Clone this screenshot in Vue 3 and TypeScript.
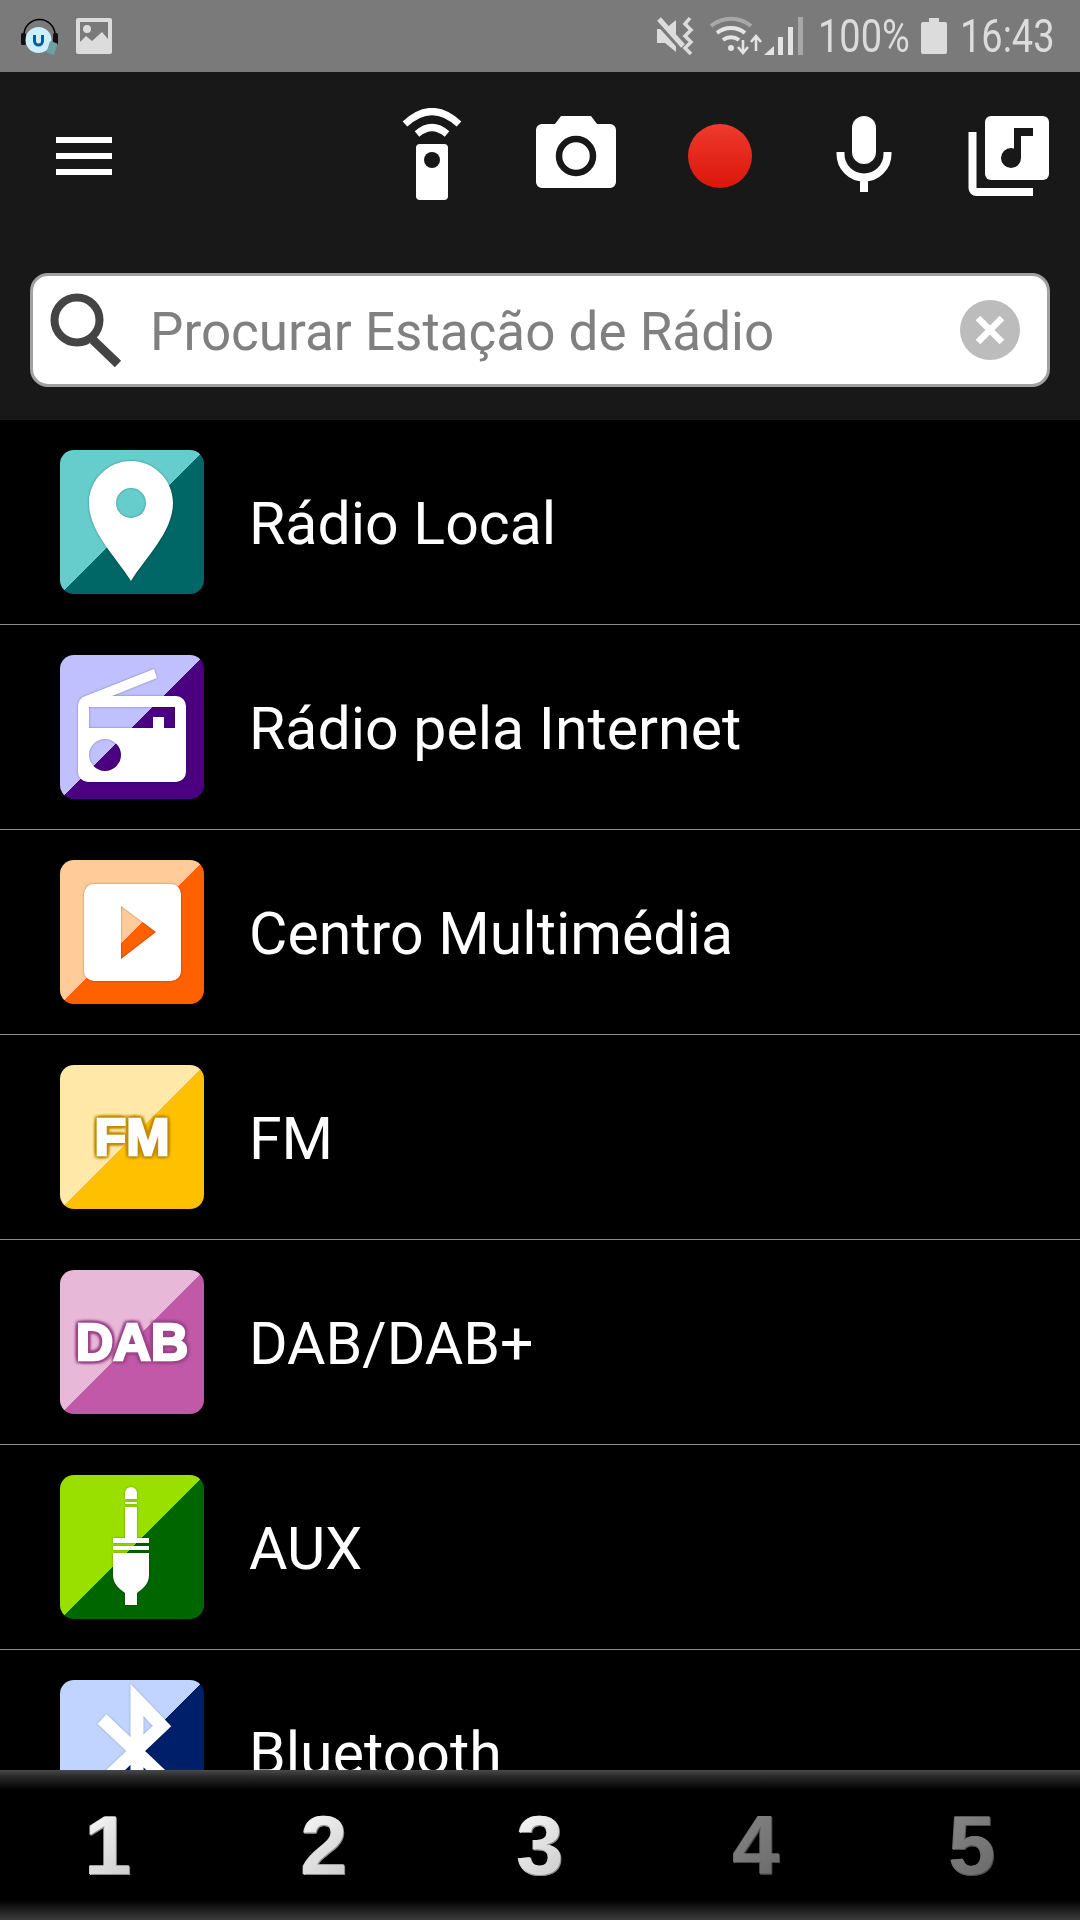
<template>
  <div class="page">
    <div class="status">
      <svg class="st-head" width="42" height="42" viewBox="0 0 42 42">
        <path d="M5 20 A15.500 15.500 0 0 1 36 20" fill="none" stroke="#000" stroke-width="1.500" />
        <rect x="2" y="18" width="5" height="12" rx="1.500" fill="#111" />
        <rect x="34" y="18" width="5" height="12" rx="1.500" fill="#111" />
        <circle cx="19.500" cy="25" r="13" fill="#cdeefc" />
        <path d="M15.500 20 V26 A4 4 0 0 0 23.500 26 V20" fill="none" stroke="#0f5c9c" stroke-width="3" />
        <rect x="29" y="27" width="8" height="12" rx="1" fill="#6f9ea3" transform="rotate(18 33 33)" />
      </svg>
      <svg class="st-pic" width="36" height="36" viewBox="0 0 36 36">
        <path fill-rule="evenodd" fill="#dcdcdc" d="M2 0 H34 A2 2 0 0 1 36 2 V34 A2 2 0 0 1 34 36 H2 A2 2 0 0 1 0 34 V2 A2 2 0 0 1 2 0Z M4 4 V24 L10 18 L16 23 L26 14 L32 21 V4Z" />
        <circle cx="11" cy="11" r="4" fill="#dcdcdc" />
      </svg>
      <div class="st-right">
        <svg width="40" height="40" viewBox="0 0 40 40">
          <path d="M1 13 H9 L20 4 V36 L9 27 H1Z" fill="#dcdcdc" />
          <path d="M0 3 L27 33" stroke="#7a7a7a" stroke-width="7" />
          <path d="M3 3 L27 30" stroke="#dcdcdc" stroke-width="5" />
          <path d="M34 2 L29 8 L35 14 L29 20 L35 26 L29 32 L35 38" fill="none" stroke="#dcdcdc" stroke-width="3.500" />
        </svg>
        <svg width="96" height="42" viewBox="0 0 96 42">
          <path d="M2 11 A31 31 0 0 1 42 11" fill="none" stroke="#a8a8a8" stroke-width="4" />
          <path d="M8 18 A22 22 0 0 1 36 18" fill="none" stroke="#e4e4e4" stroke-width="4" />
          <path d="M14 25 A13 13 0 0 1 30 25" fill="none" stroke="#e4e4e4" stroke-width="4" />
          <circle cx="22" cy="33" r="3" fill="#e4e4e4" />
          <path d="M34 25 V38 M29 32 L34 38 L39 32" fill="none" stroke="#e4e4e4" stroke-width="2.600" />
          <path d="M47 21 V36 M42 27 L47 21 L52 27" fill="none" stroke="#e4e4e4" stroke-width="2.600" />
          <path d="M55 40 L65 31 V40Z" fill="#e4e4e4" />
          <rect x="69" y="22" width="5" height="18" fill="#e4e4e4" />
          <rect x="79" y="12" width="5" height="28" fill="#e4e4e4" />
          <rect x="89" y="2" width="5" height="38" fill="#a8a8a8" />
        </svg>
        <span class="st-text pct">100%</span>
        <svg width="26" height="36" viewBox="0 0 26 36">
          <path d="M8 0 H18 V4 H24 A2 2 0 0 1 26 6 V34 A2 2 0 0 1 24 36 H2 A2 2 0 0 1 0 34 V6 A2 2 0 0 1 2 4 H8Z" fill="#dcdcdc" />
        </svg>
        <span class="st-text clock">16:43</span>
      </div>
    </div>

    <header class="toolbar">
      <div class="tools">
        <button class="menu">
          <span></span><span></span><span></span>
        </button>
        <div class="tool">
          <svg width="96" height="96" viewBox="0 0 96 96">
            <path d="M21 16 Q48 -9 75 16" fill="none" stroke="#fff" stroke-width="7" />
            <path d="M33 26 Q48 13 63 26" fill="none" stroke="#fff" stroke-width="7" />
            <rect x="32" y="36" width="32" height="56" rx="4" fill="#fff" />
            <circle cx="48" cy="52" r="8" fill="#181818" />
          </svg>
        </div>
        <div class="tool">
          <svg width="96" height="96" viewBox="0 0 96 96">
            <path d="M14 16 H27 L33 8 H63 L69 16 H82 A6 6 0 0 1 88 22 V74 A6 6 0 0 1 82 80 H14 A6 6 0 0 1 8 74 V22 A6 6 0 0 1 14 16Z" fill="#fff" />
            <circle cx="48" cy="48" r="17" fill="none" stroke="#181818" stroke-width="6.500" />
          </svg>
        </div>
        <div class="tool">
          <div class="rec"></div>
        </div>
        <div class="tool">
          <svg width="96" height="96" viewBox="0 0 96 96">
            <rect x="36" y="8" width="24" height="48" rx="12" fill="#fff" />
            <path d="M24.500 44 V46 A23.500 23.500 0 0 0 71.500 46 V44" fill="none" stroke="#fff" stroke-width="8" />
            <rect x="44" y="68" width="8" height="16" fill="#fff" />
          </svg>
        </div>
        <div class="tool">
          <svg width="96" height="96" viewBox="0 0 96 96">
            <rect x="25" y="8" width="64" height="64" rx="6" fill="#fff" />
            <path d="M12.500 24 V80 A4 4 0 0 0 16.500 84 H73" fill="none" stroke="#fff" stroke-width="8" />
            <circle cx="51" cy="50" r="10" fill="#181818" />
            <path d="M54 50 V20 H73 V28 H61 V50Z" fill="#181818" />
          </svg>
        </div>
      </div>

      <div class="search">
        <svg width="84" height="84" viewBox="0 0 84 84">
          <circle cx="34" cy="32" r="22.500" fill="none" stroke="#444" stroke-width="8" />
          <path d="M50 52 L75 76" stroke="#444" stroke-width="9" />
        </svg>
        <span class="placeholder">Procurar Estação de Rádio</span>
        <div class="clear">
          <svg width="32" height="32" viewBox="0 0 32 32">
            <path d="M4 4 L28 28 M28 4 L4 28" stroke="#fff" stroke-width="6.500" />
          </svg>
        </div>
      </div>
    </header>

    <main class="list">
      <div v-for="item in items" :key="item.label" class="row">
        <div class="icon" :style="{ background: `linear-gradient(to bottom right, ${item.light} 50%, ${item.dark} 50%)` }">
          <svg v-if="item.kind === 'pin'" width="144" height="144" viewBox="0 0 144 144">
            <path class="glyph" fill-rule="evenodd" d="M71 11 C94 11 113 30 113 53 C113 82 85 108 71 131 C57 108 29 82 29 53 C29 30 48 11 71 11Z M71 38 A15 15 0 1 0 71 68 A15 15 0 1 0 71 38Z" />
          </svg>
          <svg v-else-if="item.kind === 'radio'" width="144" height="144" viewBox="0 0 144 144">
            <path class="glyph" fill-rule="evenodd" d="M94 14 L97 23 L52 41 H116 A10 10 0 0 1 126 51 V117 A10 10 0 0 1 116 127 H28 A10 10 0 0 1 18 117 V51 C18 47 20 44 23 42Z M29 52 V73 H115 V52Z M45 84 A16 16 0 1 0 45 116 A16 16 0 1 0 45 84Z" />
            <rect x="93" y="62" width="11" height="11" fill="#fff" />
          </svg>
          <svg v-else-if="item.kind === 'play'" width="144" height="144" viewBox="0 0 144 144">
            <path class="glyph" fill-rule="evenodd" d="M34 24 H111 A10 10 0 0 1 121 34 V111 A10 10 0 0 1 111 121 H34 A10 10 0 0 1 24 111 V34 A10 10 0 0 1 34 24Z M61 46 V99 L96 72Z" />
          </svg>
          <svg v-else-if="item.kind === 'jack'" width="144" height="144" viewBox="0 0 144 144">
            <path class="glyph" d="M65 24 V18 A6 6 0 0 1 77 18 V24Z M65 27 H77 V29 H65Z M65 32 H77 V63 H89 V68 H53 V63 H65Z M53 71 H89 V75 H53Z M53 78 H89 V100 C89 108 84 113 77 118 V130 H65 V118 C58 113 53 108 53 100Z" />
          </svg>
          <svg v-else-if="item.kind === 'bluetooth'" width="144" height="144" viewBox="0 0 144 144">
            <path class="glyph-line" d="M42 39 L102 96 L77 120 V20 L102 46 L42 103" />
          </svg>
          <span v-else class="badge" :style="{ '--edge': item.edge }">{{ item.label.split('/')[0] }}</span>
        </div>
        <span class="label">{{ item.label }}</span>
      </div>
    </main>

    <footer class="presets">
      <span v-for="n in 5" :key="n" class="num" :class="{ off: n > 3 }">{{ n }}</span>
    </footer>
  </div>
</template>

<script setup lang="ts">
interface Item {
  label: string
  kind: string
  light: string
  dark: string
  edge?: string
}

const items: Item[] = [
  { label: "Rádio Local", kind: "pin", light: "#66cccc", dark: "#006666" },
  { label: "Rádio pela Internet", kind: "radio", light: "#c0c0ff", dark: "#4b0082" },
  { label: "Centro Multimédia", kind: "play", light: "#ffcc99", dark: "#ff6000" },
  { label: "FM", kind: "text", light: "#ffe8a8", dark: "#ffc000", edge: "#c08c00" },
  { label: "DAB/DAB+", kind: "text", light: "#e8b8d8", dark: "#c158a8", edge: "#9c4488" },
  { label: "AUX", kind: "jack", light: "#99e000", dark: "#006600" },
  { label: "Bluetooth", kind: "bluetooth", light: "#c0d4ff", dark: "#001f6b" }
]
</script>

<style>
body {
  background: #000;
}
</style>

<style scoped>
.page {
  display: flex;
  flex-direction: column;
  width: 1080px;
  height: 1920px;
  overflow: hidden;
  background: #000;
  font-family: Roboto, sans-serif;
}

.status {
  display: flex;
  align-items: center;
  flex: none;
  height: 72px;
  padding: 0 26px 0 19px;
  box-sizing: border-box;
  background: #7a7a7a;
}

.st-pic {
  margin-left: 15px;
}

.st-right {
  display: flex;
  align-items: center;
  gap: 13px;
  margin-left: auto;
}

/* narrow status-bar digits, no condensed family installed */
.st-text {
  font-size: 46px;
  line-height: 72px;
  white-space: nowrap;
  color: #dcdcdc;
  transform: scaleX(0.825);
  transform-origin: left center;
}

.pct {
  width: 90px;
}

.clock {
  width: 94px;
}

.toolbar {
  flex: none;
  height: 348px;
  padding-top: 36px;
  box-sizing: border-box;
  background: #181818;
}

.tools {
  display: flex;
  height: 96px;
}

.menu {
  display: flex;
  flex-direction: column;
  gap: 10px;
  justify-content: center;
  align-items: center;
  width: 144px;
  margin: 0 auto 0 12px;
  padding: 0;
  border: 0;
  background: none;
}

.menu span {
  width: 56px;
  height: 6px;
  background: #fff;
}

.tool {
  display: flex;
  align-items: center;
  justify-content: center;
  width: 144px;
}

.rec {
  width: 64px;
  height: 64px;
  border-radius: 50%;
  background: linear-gradient(#ee3a2e, #dc160a);
}

.search {
  display: flex;
  align-items: center;
  height: 114px;
  margin: 69px 30px 0;
  padding: 0 27px 0 10px;
  box-sizing: border-box;
  border: 3px solid #a0a0a0;
  border-radius: 18px;
  background: #fff;
}

.placeholder {
  margin-left: 23px;
  padding-top: 3px;
  font-size: 53px;
  color: #808080;
}

.clear {
  display: flex;
  align-items: center;
  justify-content: center;
  width: 60px;
  height: 60px;
  margin-left: auto;
  border-radius: 50%;
  background: #bcbcbc;
}

.list {
  flex: 1;
  min-height: 0;
  overflow: hidden;
}

.row {
  display: flex;
  align-items: center;
  height: 205px;
  padding-left: 60px;
  box-sizing: border-box;
  border-bottom: 1px solid #8c8c8c;
}

.icon {
  display: flex;
  align-items: center;
  justify-content: center;
  flex: none;
  width: 144px;
  height: 144px;
  overflow: hidden;
  border-radius: 14px;
}

.glyph {
  fill: #fff;
  filter: drop-shadow(0 0 1px rgba(0, 0, 0, 0.35));
}

.glyph-line {
  fill: none;
  stroke: #fff;
  stroke-width: 13;
  filter: drop-shadow(0 0 1px rgba(0, 0, 0, 0.25));
}

.badge {
  font-family: "Liberation Sans", sans-serif;
  font-size: 52px;
  font-weight: 700;
  color: #fff;
  -webkit-text-stroke: 2.5px #fff;
  text-shadow: 3px 0 2px var(--edge), -3px 0 2px var(--edge), 0 3px 2px var(--edge), 0 -3px 2px var(--edge), 3px 3px 3px var(--edge), -3px -3px 3px var(--edge), 3px -3px 3px var(--edge), -3px 3px 3px var(--edge);
}

.label {
  margin-left: 45px;
  padding-top: 3px;
  font-size: 59px;
  color: #fff;
}

.presets {
  display: grid;
  grid-template-columns: repeat(5, 1fr);
  flex: none;
  height: 150px;
  background: linear-gradient(#4a4a4a 0, #2c2c2c 6px, #000 20px, #000 130px, #3c3c3c 150px);
}

.num {
  font-family: "Liberation Sans", sans-serif;
  font-size: 84px;
  font-weight: 700;
  line-height: 150px;
  text-align: center;
  color: transparent;
  background: linear-gradient(135deg, #fff 30%, #c4c4c4 70%);
  background-clip: text;
  -webkit-background-clip: text;
  filter: drop-shadow(1px 1px 0 #8a8a8a) drop-shadow(-1px 0 0 #d8d8d8);
}

.num.off {
  background: linear-gradient(135deg, #8a8a8a 30%, #666 70%);
  background-clip: text;
  -webkit-background-clip: text;
  filter: drop-shadow(1px 1px 0 #4c4c4c) drop-shadow(-1px 0 0 #6e6e6e);
}
</style>
